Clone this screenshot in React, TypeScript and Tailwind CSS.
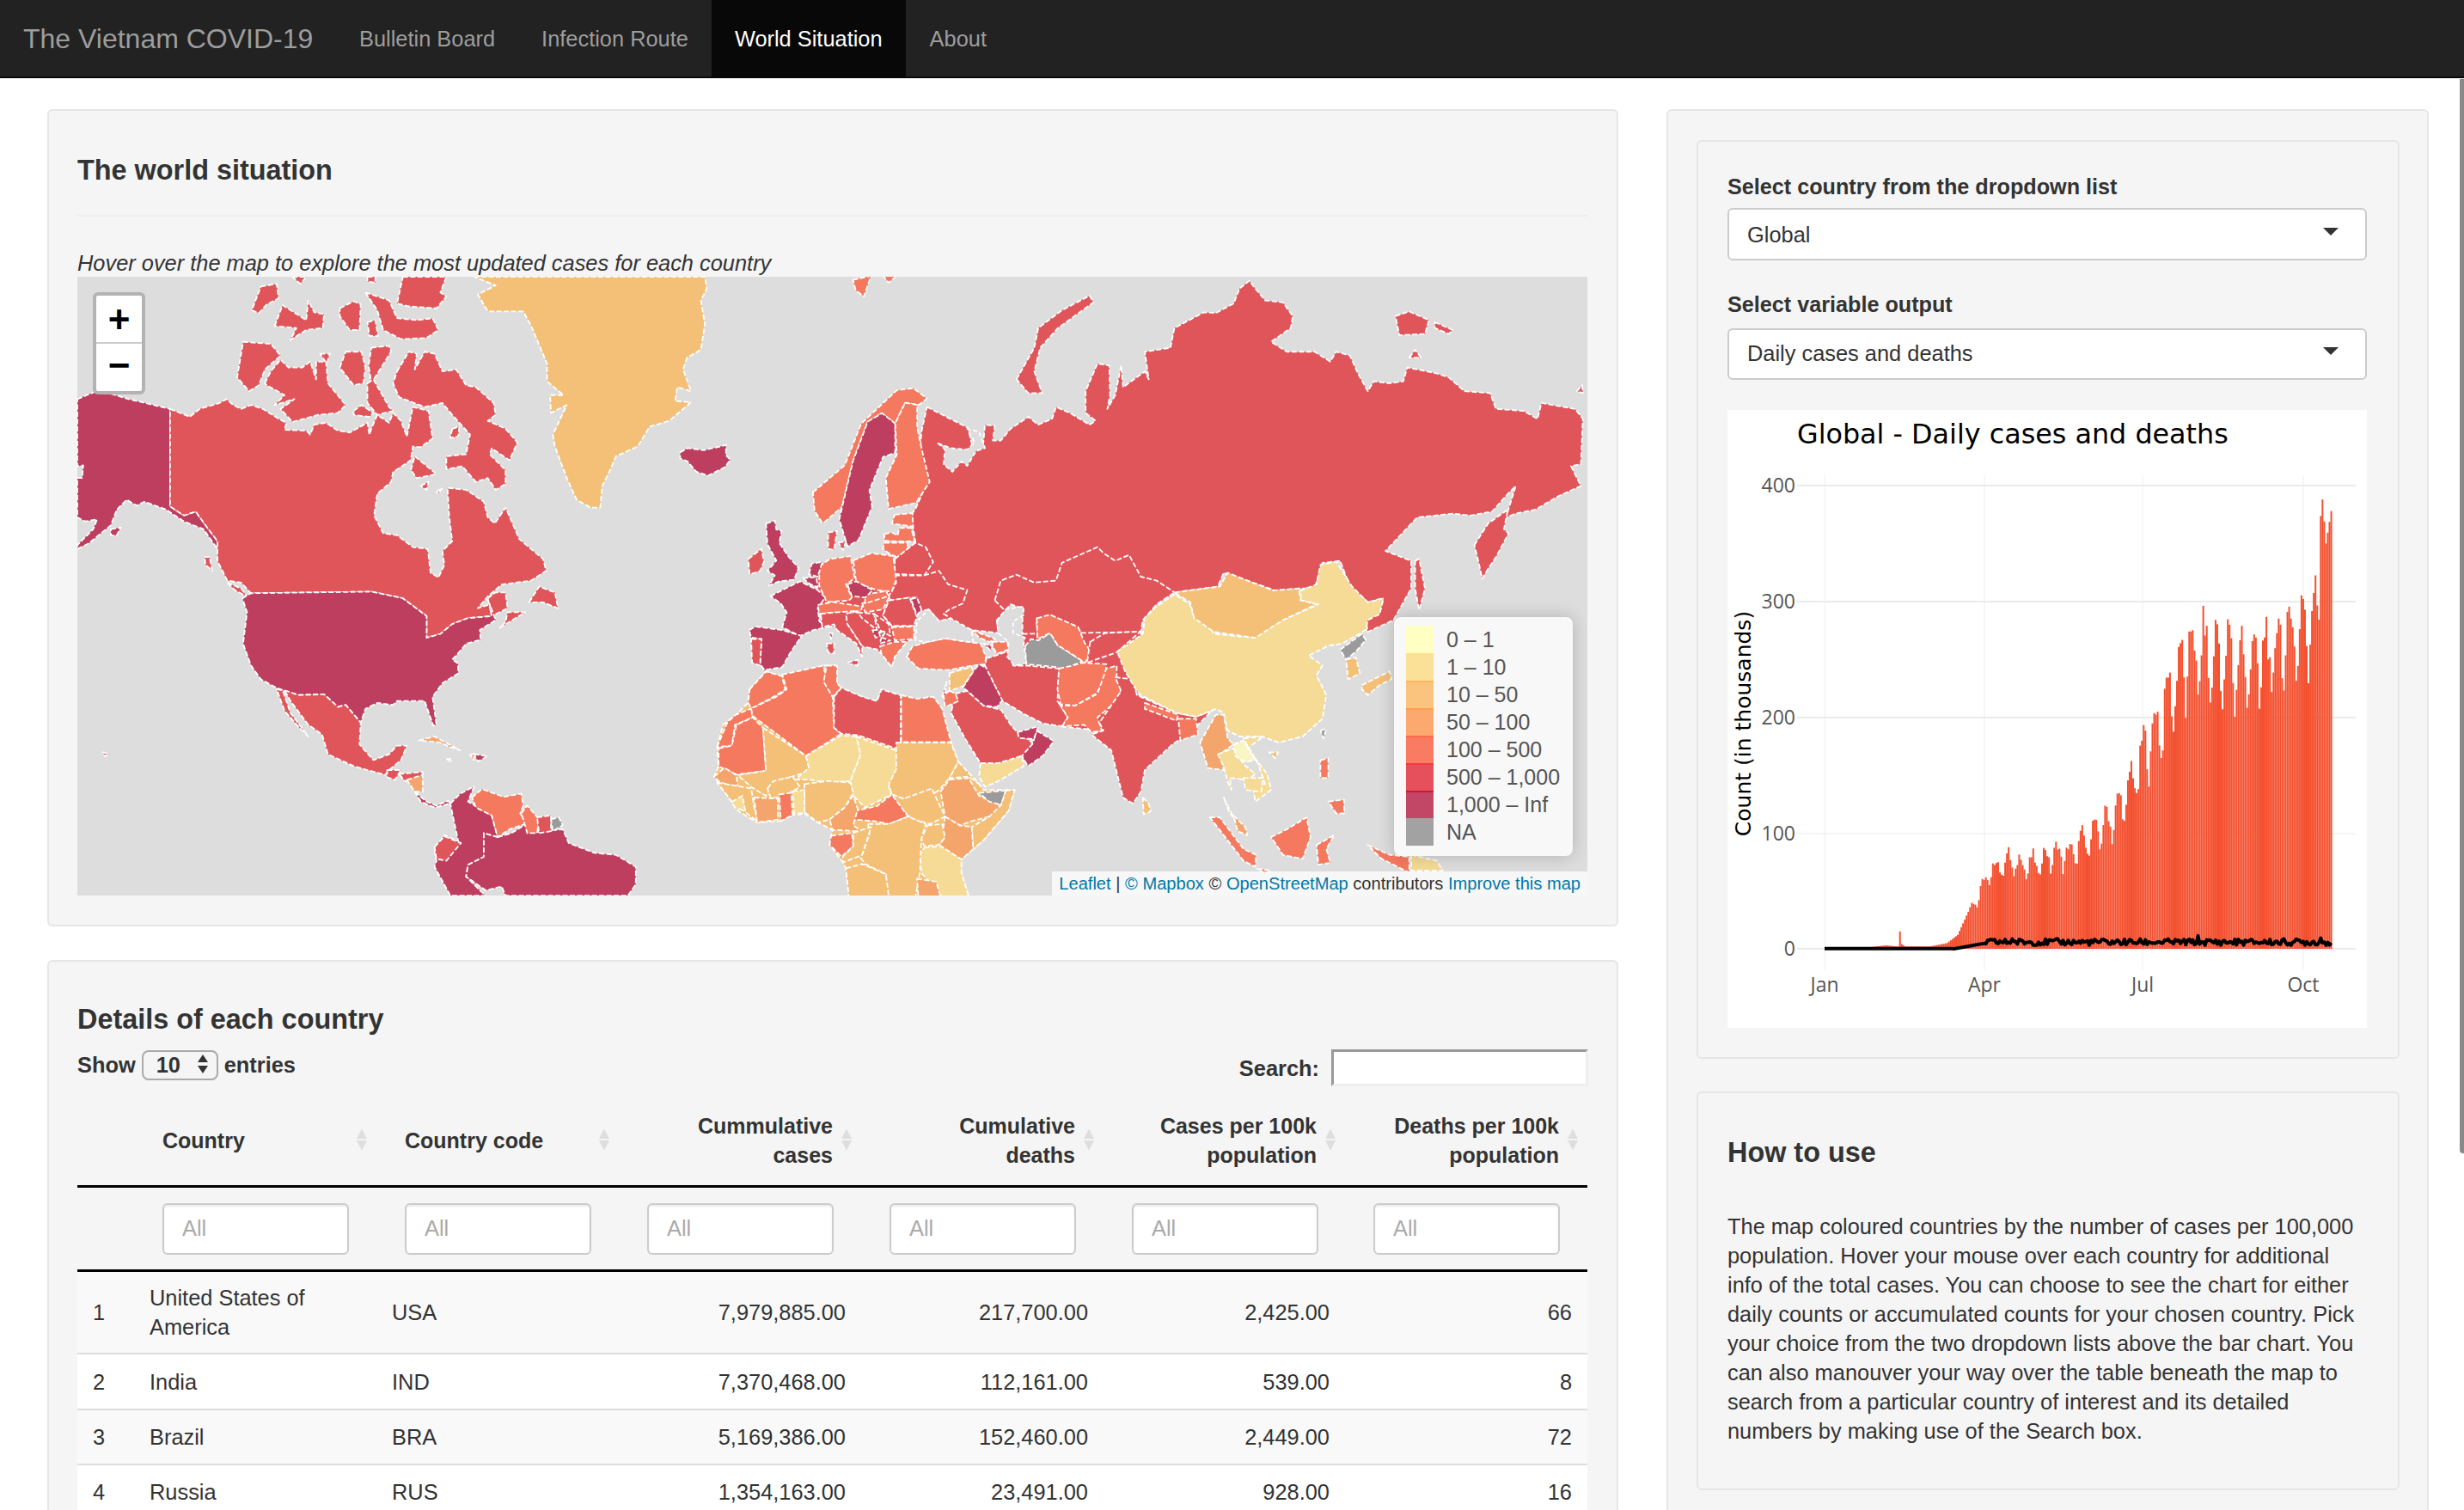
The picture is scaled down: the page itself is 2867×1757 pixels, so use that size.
import React from "react";

const C = {
  a: "#bd3e5e",
  r: "#e0555a",
  o: "#f5795e",
  l: "#f4a56c",
  m: "#f4c078",
  y: "#f5db96",
  p: "#f9f6c4",
  g: "#9b9b9b",
  s: "#dddddd",
};
type Shape = [keyof typeof C, string];

const Z8: Shape[] = [
  ["a", "0,310 60,285 80,295 130,310 235,335 235,582 270,605 300,595 325,630 355,670 355,690 320,640 270,620 225,590 170,570 150,580 125,565 100,590 85,630 60,650 30,675 0,690 0,680 40,640 50,615 20,620 0,610 0,510 12,510 15,478 0,480"],
  ["a", "85,640 110,635 100,655 85,655"],
  ["r", "235,335 285,355 310,335 360,320 378,310 395,325 415,335 440,325 470,335 510,360 530,370 525,388 580,390 590,400 600,375 630,370 660,390 690,395 735,370 740,400 745,385 760,350 790,370 800,345 820,365 835,405 850,330 890,340 900,410 870,432 850,430 845,465 800,495 795,520 760,550 752,605 775,650 810,655 850,685 888,690 895,750 915,762 930,730 925,695 950,670 942,605 938,535 985,540 1030,570 1040,610 1058,625 1085,585 1120,665 1180,715 1188,745 1150,770 1075,780 1040,810 1015,840 1045,830 1050,860 990,865 950,880 920,905 885,915 885,860 825,815 745,798 440,802 415,775 380,770 355,720 355,670 325,630 300,595 270,605 235,582"],
  ["r", "810,240 840,190 860,195 855,235 880,190 905,195 925,240 960,235 985,275 1010,280 1055,320 1060,350 1040,365 1085,385 1115,420 1095,465 1050,435 1045,450 1085,490 1085,525 1060,540 1040,510 1010,520 975,480 935,488 935,455 985,450 995,400 950,350 925,320 880,330 815,305 800,270"],
  ["r", "825,0 935,0 920,40 935,50 910,80 840,75 810,68"],
  ["r", "730,40 790,60 810,105 860,110 900,105 915,135 885,155 820,158 775,135 760,85"],
  ["r", "665,80 700,62 718,70 715,135 690,135 665,100"],
  ["r", "735,115 755,110 762,150 740,150"],
  ["r", "545,0 580,0 565,18"],
  ["r", "735,0 755,0 755,15 735,12"],
  ["r", "465,25 505,18 510,55 480,70 460,92 442,85"],
  ["r", "500,125 520,72 580,110 585,60 600,90 625,95 622,130 580,135 540,160 555,130"],
  ["r", "420,165 490,170 515,200 475,235 460,275 435,290 405,255"],
  ["r", "475,270 490,240 515,210 535,230 570,230 590,215 605,260 605,215 630,215 635,270 680,325 660,345 610,350 545,368 515,335 550,310 500,325 525,300 480,275"],
  ["r", "615,195 640,195 632,220"],
  ["r", "680,190 720,190 730,230 725,270 700,275 665,230"],
  ["r", "745,180 790,175 795,190 745,270 738,225"],
  ["r", "735,270 750,260 790,330 800,340 760,350 735,320"],
  ["r", "700,340 720,325 750,345 740,355 700,350"],
  ["r", "845,490 855,455 910,500 860,510"],
  ["r", "870,530 890,520 885,540"],
  ["r", "910,545 925,535 915,550"],
  ["r", "950,385 968,380 965,405 945,408"],
  ["r", "1145,825 1170,785 1210,800 1218,840 1180,825"],
  ["r", "1070,890 1135,850 1090,850 1085,875"],
  ["r", "1040,815 1060,800 1085,800 1090,840 1050,860"],
  ["r", "380,775 415,790 430,810 400,795"],
  ["r", "322,710 335,710 342,745 325,730"],
  ["a", "418,815 440,802 745,798 825,815 885,860 885,915 920,905 950,880 990,865 1050,860 1045,830 1060,870 1020,895 1022,920 985,930 960,960 950,970 965,980 965,1005 925,1030 900,1065 910,1135 902,1138 880,1075 810,1075 800,1085 760,1080 730,1095 718,1130 680,1085 660,1090 625,1058 560,1060 505,1042 465,1020 440,985 420,930 430,850"],
  ["r", "525,1048 560,1060 625,1058 660,1090 680,1085 718,1130 715,1185 750,1225 790,1210 810,1188 835,1188 820,1225 790,1250 780,1262 735,1250 700,1240 635,1210 620,1160 585,1135 540,1075"],
  ["r", "505,1045 520,1048 540,1105 585,1165 560,1140 525,1100"],
  ["r", "785,1250 820,1250 805,1275 785,1268"],
  ["r", "815,1260 875,1255 875,1270 830,1278"],
  ["l", "835,1275 875,1262 875,1305 855,1305"],
  ["a", "855,1305 885,1330 910,1340 940,1328 945,1335 905,1345 870,1330"],
  ["l", "865,1175 905,1165 970,1200 940,1190 920,1180"],
  ["a", "1005,1210 1040,1215 1015,1228"],
  ["l", "995,1212 1005,1208 1005,1225"],
  ["o", "935,1222 950,1222 945,1228"],
  ["a", "65,1205 80,1210 70,1215"],
  ["m", "1005,0 1590,0 1595,30 1580,60 1590,120 1580,185 1545,205 1535,235 1555,290 1520,280 1515,315 1555,318 1500,365 1450,380 1420,430 1365,455 1350,490 1330,530 1325,585 1300,585 1265,565 1240,510 1210,430 1205,400 1240,325 1200,345 1198,300 1232,300 1190,265 1190,220 1150,125 1130,88 1040,88 1015,45 1060,22"],
  ["a", "945,1335 970,1310 1005,1292 990,1330 1050,1365 1065,1420 1030,1410 1030,1470 990,1490 985,1520 1020,1555 1035,1568 945,1568 905,1495 910,1480 905,1455 930,1415 965,1430"],
  ["r", "905,1445 930,1418 972,1435 935,1480 910,1475"],
  ["a", "1065,1420 1100,1410 1140,1385 1145,1410 1230,1400 1245,1435 1310,1460 1365,1465 1415,1495 1415,1540 1395,1568 1085,1568 1075,1545 1035,1555 985,1520 990,1490 1030,1470 1030,1410"],
  ["o", "1000,1320 1025,1298 1080,1318 1125,1310 1130,1340 1122,1360 1140,1385 1095,1400 1065,1420 1050,1365 1010,1345"],
  ["o", "1125,1360 1140,1340 1170,1375 1165,1410 1140,1410 1130,1375"],
  ["r", "1165,1370 1200,1365 1200,1405 1170,1410"],
  ["g", "1200,1375 1220,1370 1230,1390 1205,1405"],
];

const Z10BASE: Shape[] = [
  ["r", "-112,330 -8,383 2,425 0,435 30,430 35,375 60,378 55,415 75,415 100,385 145,355 170,375 205,360 215,330 250,345 300,375 315,365 290,345 290,290 320,220 350,225 352,300 345,335 365,300 380,225 385,280 440,240 450,260 440,190 505,180 515,130 590,90 620,92 665,68 680,30 705,10 720,30 745,60 790,65 815,100 810,130 760,165 800,190 870,190 910,215 925,190 960,200 980,245 1005,290 1020,265 1060,270 1095,265 1105,230 1180,245 1210,255 1250,290 1315,295 1330,335 1400,340 1435,360 1445,320 1530,335 1550,360 1545,475 1520,480 1545,530 1490,555 1430,590 1380,600 1355,610 1380,530 1360,550 1320,595 1265,605 1220,600 1130,610 1050,695 1115,720 1115,790 1070,870 1005,900 1000,870 1040,815 1005,825 960,785 935,720 890,725 870,790 830,790 770,795 700,770 640,750 625,785 515,800 470,830 435,870 430,900 330,905 305,930 265,885 200,858 165,870 170,915 130,905 130,840 100,830 65,870 69,903 1,895 -66,873 -107,843 -137,813 -190,768 -194,715 -141,674 -152,603 -141,588 -111,520 -130,453 -126,393"],
  ["r", "130,905 430,900 440,1060 380,1050 330,1150 230,1140 130,1000"],
];

const Z2: Shape[] = [
  ["o", "72,565 130,500 160,400 225,320 255,315 280,340 265,355 240,350 222,400 198,375 172,395 145,490 125,600 90,640 75,610"],
  ["a", "172,395 198,375 222,400 222,470 200,480 175,560 180,600 155,680 135,695 120,630 145,490"],
  ["o", "240,350 262,355 262,410 272,470 285,540 260,590 210,605 205,530 225,475 222,400"],
  ["o", "145,55 178,45 165,95 150,80"],
  ["o", "200,45 225,45 210,62"],
];

const Z9: Shape[] = [
  ["m", "100,1075 120,1000 165,965 205,925 210,880 265,820 318,835 460,800 505,800 505,860 520,875 590,905 640,920 655,880 720,900 775,912 830,905 860,945 890,1058 915,1125 985,1200 1000,1220 1105,1220 1085,1290 1000,1390 965,1420 925,1455 925,1500 950,1580 545,1580 535,1485 525,1465 480,1405 490,1355 440,1330 395,1300 355,1305 315,1325 235,1330 170,1290 90,1175 105,1140"],
  ["r", "410,490 560,445 700,440 705,520 680,580 660,630 690,670 765,668 765,710 740,720 700,770 690,805 655,760 640,745 590,735 540,660 470,670 440,605 440,545"],
  ["a", "-25,80 0,65 55,72 130,55 130,90 145,105 125,130 70,158 30,145 0,110 -25,100"],
  ["s", "845,48 870,70 865,120 895,145 925,110 945,125 975,75 1005,65 985,10 945,0 970,45 945,70 890,65"],
  ["o", "700,290 760,285 762,330 690,320"],
  ["o", "665,355 690,350 710,360 715,335 755,335 768,380 710,380 665,378"],
  ["o", "665,385 745,385 740,410 710,435 680,420 660,405"],
  ["r", "700,440 770,385 805,400 830,450 800,495 700,490"],
  ["r", "700,495 800,495 850,480 880,525 945,545 930,590 885,610 865,625 890,640 850,650 815,610 790,615 775,570 750,570 690,580 680,565 705,520"],
  ["o", "560,445 620,420 695,430 705,510 690,550 640,545 570,520"],
  ["r", "680,580 750,570 775,635 765,665 690,665 660,630"],
  ["a", "755,575 775,570 790,610 775,630"],
  ["o", "690,670 765,668 765,710 700,715"],
  ["o", "590,590 660,560 680,570 660,610 600,620"],
  ["o", "600,560 670,548 680,565 600,590"],
  ["o", "445,465 480,440 550,430 565,505 535,525 555,570 545,580 470,585 445,530"],
  ["a", "540,525 570,515 625,545 600,570 555,565"],
  ["r", "475,350 505,345 495,410 475,405"],
  ["r", "510,385 535,380 525,410"],
  ["a", "410,490 420,455 455,450 440,500"],
  ["a", "390,505 435,500 440,535 415,525"],
  ["a", "280,565 380,515 440,545 465,570 440,605 445,650 470,670 425,680 380,700 320,670 335,620 315,590"],
  ["o", "440,595 490,585 590,600 585,620 490,620 445,625"],
  ["r", "450,625 500,620 575,615 535,625 540,660 590,735 590,770 570,725 505,680 495,660 455,670"],
  ["r", "540,790 575,780 575,800"],
  ["r", "470,725 495,725 495,760 475,755"],
  ["a", "480,690 490,690 485,710"],
  ["r", "575,620 630,625 640,680 590,640"],
  ["r", "630,625 680,660 685,700 650,680"],
  ["a", "625,680 645,680 650,700 635,705"],
  ["g", "650,685 670,685 660,700"],
  ["a", "655,705 685,715 650,725"],
  ["o", "650,735 700,720 740,720 700,770 690,805 655,760"],
  ["o", "740,770 760,735 810,720 870,708 960,722 990,725 1008,770 1005,795 960,800 880,815 780,810"],
  ["o", "960,680 1040,710 1020,720 985,705"],
  ["o", "1030,720 1080,720 1085,745 1045,760 1030,735"],
  ["a", "1000,725 1030,735 1025,750"],
  ["a", "265,320 295,310 300,340 318,345 310,385 340,430 375,470 360,510 310,515 275,530 295,495 270,480 300,445 270,390"],
  ["r", "205,440 250,405 258,450 245,480 210,492"],
  ["a", "208,680 230,668 320,680 385,700 345,760 320,805 260,815 245,795 250,710 215,705"],
  ["r", "215,710 250,710 245,800 218,790"],
  ["o", "210,880 265,820 318,835 330,880 300,900 215,945 205,925"],
  ["o", "100,1075 135,990 165,965 215,945 220,975 160,1000 150,1070"],
  ["o", "320,830 460,800 470,870 490,905 495,1010 520,1030 400,1105 220,970 215,945 300,905 335,880"],
  ["o", "470,800 505,800 505,860 520,875 490,905 460,855"],
  ["r", "495,905 520,875 590,905 640,920 655,880 720,900 720,1085 575,1035 520,1030 495,1010"],
  ["o", "722,900 775,912 830,905 860,945 890,1058 722,1058"],
  ["o", "105,1080 150,1070 165,1000 220,975 255,1010 265,1155 165,1168 105,1140"],
  ["m", "255,1010 400,1105 410,1145 400,1160 290,1195 265,1240 215,1210 170,1170 265,1155"],
  ["y", "400,1105 520,1035 570,1040 585,1100 550,1190 470,1195 410,1185 365,1185 410,1145"],
  ["y", "570,1040 715,1090 705,1150 680,1210 690,1235 600,1280 560,1240 550,1190 585,1100"],
  ["m", "705,1060 890,1060 915,1125 885,1180 850,1220 820,1240 730,1250 690,1235 680,1200 705,1150"],
  ["m", "690,1235 730,1250 825,1215 870,1310 820,1335 760,1320 720,1280"],
  ["o", "560,1320 570,1290 640,1275 690,1235 745,1310 680,1335 630,1325"],
  ["m", "395,1200 470,1190 550,1195 560,1230 530,1280 480,1320 440,1330 395,1295"],
  ["l", "480,1320 530,1280 560,1240 575,1285 560,1340 590,1360 490,1355"],
  ["l", "90,1175 125,1145 165,1170 170,1210 110,1195"],
  ["m", "100,1195 215,1215 225,1280 240,1330 150,1260"],
  ["y", "150,1260 185,1240 195,1290 160,1280"],
  ["l", "225,1245 305,1250 305,1320 235,1330"],
  ["m", "270,1215 290,1190 355,1175 380,1210 320,1245 280,1245"],
  ["o", "310,1235 350,1230 355,1305 315,1325"],
  ["y", "355,1225 395,1220 395,1298 360,1300"],
  ["l", "885,1185 950,1180 985,1240 1075,1280 1020,1310 960,1325 920,1340 870,1310 855,1225"],
  ["m", "915,1125 985,1200 950,1175 885,1180"],
  ["g", "985,1230 1075,1222 1060,1270 1020,1260"],
  ["m", "1075,1222 1105,1220 1085,1290 1000,1390 965,1420 960,1345 1020,1310 1060,1270"],
  ["l", "870,1310 920,1340 960,1345 965,1420 925,1455 855,1410"],
  ["m", "810,1340 860,1335 870,1380 850,1405 800,1410 790,1385"],
  ["y", "800,1415 855,1410 925,1455 925,1500 950,1580 860,1580 790,1500 785,1440"],
  ["m", "610,1335 680,1335 745,1310 805,1335 790,1385 785,1500 770,1580 670,1580 670,1505 600,1470 585,1450 615,1370"],
  ["o", "485,1375 555,1365 560,1410 520,1445 480,1405"],
  ["m", "560,1365 620,1345 590,1440 525,1465 525,1445 560,1410"],
  ["m", "535,1485 590,1470 670,1505 680,1580 545,1580"],
  ["l", "775,1520 840,1530 855,1580 780,1580"],
  ["r", "905,895 945,885 1000,935 1060,950 1095,1005 1120,1030 1150,1050 1165,1060 1145,1100 1050,1130 990,1130 940,1050 890,960"],
  ["a", "930,875 965,820 985,795 1020,815 1030,850 1065,915 1045,940 1000,935 945,885"],
  ["m", "885,825 960,805 965,820 930,870 885,885"],
  ["o", "885,885 905,895 915,920 870,940 865,900"],
  ["a", "860,905 875,855 870,895"],
  ["r", "1010,775 1030,770 1085,750 1100,800 1150,800 1255,810 1250,920 1285,975 1265,1005 1200,995 1140,965 1065,920 1030,850 1005,800"],
  ["y", "990,1130 1050,1130 1130,1105 1135,1140 1050,1190 1005,1210 985,1175"],
  ["a", "1180,1020 1238,1055 1200,1105 1150,1140 1130,1105 1165,1065"],
  ["a", "1115,1025 1185,1005 1170,1048 1120,1045"],
  ["g", "1140,735 1160,710 1185,715 1225,690 1250,730 1335,785 1300,800 1275,830 1250,805 1145,795"],
  ["o", "1180,640 1225,628 1320,670 1340,720 1360,750 1345,790 1335,785 1250,730 1225,690 1182,710"],
  ["r", "1360,720 1410,690 1530,685 1450,755 1350,790"],
  ["o", "1255,810 1300,800 1335,790 1415,795 1410,850 1380,895 1310,935 1260,930 1250,880"],
  ["o", "1265,1005 1285,975 1260,935 1310,935 1385,895 1415,810 1450,800 1450,845 1465,880 1450,920 1385,975 1400,1020 1365,1025 1340,1000"],
  ["s", "1045,650 1075,610 1135,600 1135,630 1100,650 1100,690 1140,705 1135,730 1145,790 1105,800 1080,770 1085,720 1050,690"],
  ["s", "770,715 775,650 815,610 850,650 890,640 960,680 965,722 870,708 810,720"],
];

const Z10: Shape[] = [
  ["r", "365,1015 410,1020 420,1060 520,1105 570,1115 610,1100 575,1135 560,1160 525,1175 510,1185 440,1250 430,1305 410,1335 385,1320 355,1200 305,1160 335,1150 325,1130 380,1050"],
  ["o", "525,1120 570,1120 575,1160 530,1175"],
  ["o", "440,1080 525,1110 520,1125 440,1095"],
  ["y", "370,950 435,905 440,865 470,835 515,805 555,830 565,865 600,880 615,905 715,915 780,875 790,870 880,830 835,820 835,795 875,780 885,730 925,722 965,785 1005,825 1045,815 1035,855 1005,870 1000,895 940,930 905,935 855,960 890,985 875,1010 900,1060 890,1120 840,1165 780,1180 735,1165 680,1165 650,1150 640,1105 620,1095 570,1115 520,1105 430,1060 420,1050 390,1000"],
  ["m", "515,800 630,785 650,750 700,770 765,795 830,790 835,820 875,830 790,870 720,915 615,900 565,865 555,825"],
  ["g", "935,945 990,905 1000,920 975,950 950,970"],
  ["m", "950,970 975,965 985,1005 955,1020"],
  ["m", "990,1035 1060,1000 1065,1020 1035,1035 1005,1060 990,1045"],
  ["g", "885,1150 900,1145 893,1170"],
  ["r", "1125,720 1135,715 1150,790 1135,845 1125,790"],
  ["r", "1275,680 1310,625 1360,590 1350,640 1362,650 1330,710 1310,740 1295,765 1285,720"],
  ["r", "115,260 160,180 170,130 230,85 300,48 310,65 220,130 175,180 160,240 180,295 145,295"],
  ["r", "1075,100 1110,88 1160,110 1150,145 1085,148"],
  ["r", "1175,115 1220,135 1210,145 1175,130"],
  ["r", "1110,205 1125,185 1140,205"],
  ["r", "1535,290 1548,275 1550,295"],
  ["l", "580,1180 620,1110 640,1110 650,1170 665,1185 630,1210 640,1250 600,1245"],
  ["y", "625,1210 665,1195 690,1235 720,1260 700,1275 655,1270 660,1300 650,1280 640,1240"],
  ["p", "665,1185 690,1175 720,1225 695,1230 670,1215"],
  ["y", "690,1170 740,1165 700,1195 750,1260 760,1300 720,1330 715,1300 745,1285 725,1230"],
  ["y", "690,1270 740,1270 735,1305 695,1300"],
  ["y", "640,1320 665,1370 655,1360"],
  ["o", "605,1370 630,1370 690,1450 722,1465 720,1495 690,1480"],
  ["l", "665,1365 695,1395 700,1415 675,1405"],
  ["o", "760,1420 800,1400 850,1370 860,1420 840,1475 790,1465"],
  ["o", "885,1225 905,1220 905,1270 885,1270"],
  ["o", "905,1330 945,1325 945,1360 925,1360"],
  ["o", "875,1440 920,1415 900,1450 910,1485 880,1490"],
  ["o", "1005,1440 1060,1465 1110,1470 1110,1510 1040,1475"],
  ["y", "1115,1465 1180,1480 1195,1505 1115,1505"],
  ["m", "435,1320 450,1335 455,1355 437,1362"],
  ["m", "755,1205 778,1205 770,1220"],
  ["o", "725,1500 760,1505 745,1512"],
];

const LINES10 = [
  "60,820 75,770 115,755 160,775 215,770 230,725 320,685 335,700 365,720 400,705 430,760 470,770 515,800",
  "60,820 85,845",
];

function Shapes({ list, transform }: { list: Shape[]; transform: string }) {
  return (
    <g transform={transform}>
      {list.map(([c, p], i) => (
        <polygon
          key={i}
          points={p}
          fill={C[c]}
          stroke="#fff"
          strokeWidth={1.8}
          strokeDasharray={c === "s" ? "5 3" : "6 2.5"}
          strokeLinejoin="round"
          vectorEffect="non-scaling-stroke"
        />
      ))}
    </g>
  );
}

function WorldMap() {
  const t8 = "translate(0,0) scale(0.4592)";
  const t9 = "translate(710,177) scale(0.3444)";
  const t10 = "translate(1040,0) scale(0.4592)";
  const t2 = "translate(810,-23) scale(0.6378,0.4847)";
  return (
    <svg viewBox="0 0 1757 720" className="block w-full h-full" preserveAspectRatio="none">
      <rect width="1757" height="720" fill="#dddddd" />
      <Shapes list={Z10BASE} transform={t10} />
      <Shapes list={Z2} transform={t2} />
      <Shapes list={Z9} transform={t9} />
      <Shapes list={Z10} transform={t10} />
      <g transform={t10}>
        {LINES10.map((p, i) => (
          <polyline key={i} points={p} fill="none" stroke="#fff" strokeWidth={1.8} strokeDasharray="6 2.5" vectorEffect="non-scaling-stroke" />
        ))}
      </g>
      <Shapes list={Z8} transform={t8} />
    </svg>
  );
}

const LEGEND: [string, string, string][] = [
  ["#ffffc4", "#fffdc0", "0 – 1"],
  ["#fbe098", "#fee08e", "1 – 10"],
  ["#fbc47e", "#fdb85f", "10 – 50"],
  ["#fca970", "#fd9d50", "50 – 100"],
  ["#f97c62", "#fb6a4a", "100 – 500"],
  ["#e5505a", "#ef3b3f", "500 – 1,000"],
  ["#c24766", "#c5183b", "1,000 – Inf"],
  ["#a2a2a2", "#a2a2a2", "NA"],
];

function Legend() {
  return (
    <div className="absolute left-[1532px] top-[396px] w-[208px] h-[278px] rounded-lg bg-[#f8f8f8] shadow-[0_0_20px_rgba(0,0,0,0.2)] pl-[14px] pt-[10px]">
      {LEGEND.map(([c, t, l], i) => (
        <div key={l} className="flex h-[32px] items-center">
          <div
            className={"w-[32px] h-[32px]" + (i === 0 ? "" : " border-t-2")}
            style={{ background: c, borderTopColor: t }}
          />
          <div className="ml-[15px] text-[25px] leading-[32px] text-[#555]">{l}</div>
        </div>
      ))}
    </div>
  );
}

function ZoomControl() {
  return (
    <div className="absolute left-[18px] top-[18px] w-[61px] border-[4px] border-[#b3b3b3] rounded-md bg-white text-black font-bold text-center text-[44px] leading-[56px]">
      <div className="h-[56px] border-b-2 border-[#ccc]">+</div>
      <div className="h-[55px] leading-[50px]">−</div>
    </div>
  );
}

function Attribution() {
  return (
    <div className="absolute right-0 bottom-0 h-[28px] px-[8px] bg-white/75 text-[20.1px] leading-[28px] text-[#333] whitespace-nowrap">
      <span className="text-[#0078a8]">Leaflet</span> | <span className="text-[#0078a8]">© Mapbox</span> © <span className="text-[#0078a8]">OpenStreetMap</span> contributors <span className="text-[#0078a8]">Improve this map</span>
    </div>
  );
}

const KEYS: [number, number][] = [
  [21, 0.5], [35, 3], [42, 2], [43, 15], [44, 4], [46, 2], [60, 2], [70, 5], [76, 12], [82, 32], [88, 55], [95, 78], [103, 88], [110, 85], [120, 85], [130, 95], [140, 95], [150, 110], [160, 125], [168, 140], [176, 170], [184, 205], [192, 230], [200, 270], [207, 292], [213, 298], [240, 285], [255, 295], [262, 310], [270, 322], [276, 325], [281, 345], [284, 388], [286, 350], [289, 378],
];
const WEEK = [1, 0.94, 0.84, 0.74, 0.8, 0.92, 0.98];

function rnd(d: number) {
  const x = Math.sin(d * 12.9898) * 43758.5453;
  return x - Math.floor(x);
}

function cases(d: number) {
  for (let i = 0; i < KEYS.length - 1; i++) {
    const [a, va] = KEYS[i];
    const [b, vb] = KEYS[i + 1];
    if (d >= a && d <= b) {
      const v = va + ((vb - va) * (d - a)) / (b - a);
      if (d < 85 || d >= 283) return v;
      return v * WEEK[d % 7] * (0.9 + 0.12 * rnd(d));
    }
  }
  return 0;
}
function deaths(d: number) {
  if (d < 74) return 0.1;
  if (d < 92) return ((d - 74) / 18) * 5;
  const spike = d === 107 ? 4 : d === 213 ? 3 : d === 283 ? 3 : 0;
  return 3 + 5.5 * rnd(d + 500) + spike;
}

const X0 = 2123;
const DX = 2.04;
const Y0 = 1104;
const YS = 1.3475;

function Chart() {
  const days = Array.from({ length: 290 }, (_, i) => i);
  const line = days.map((d) => `${X0 + d * DX},${Y0 - deaths(d) * YS}`).join(" ");
  return (
    <svg viewBox="2010 477 744 719" className="block w-full h-full bg-white">
      {[2123, 2309, 2493, 2680].map((x) => (
        <line key={x} x1={x} x2={x} y1={553} y2={1129} stroke="#eeeeee" strokeWidth={1} />
      ))}
      {[565, 700, 835, 970, 1104].map((y, i) => (
        <line key={y} x1={2091} x2={2741} y1={y} y2={y} stroke="#ebebeb" strokeWidth={i === 3 ? 1 : 2} />
      ))}
      {days.map((d) => {
        const v = cases(d);
        if (v <= 0) return null;
        return <rect key={d} x={X0 + d * DX - 1} y={Y0 - v * YS} width={2} height={v * YS} fill="#f4502f" />;
      })}
      <polyline points={line} fill="none" stroke="#000" strokeWidth={4} strokeLinejoin="round" />
      <g fontFamily="'Open Sans',sans-serif" fontSize={23} fill="#555">
        {[["400", 565], ["300", 700], ["200", 835], ["100", 970], ["0", 1104]].map(([t, y]) => (
          <text key={t} x={2089} y={Number(y) + 8} textAnchor="end">{t}</text>
        ))}
        {[["Jan", 2123], ["Apr", 2309], ["Jul", 2493], ["Oct", 2680]].map(([t, x]) => (
          <text key={t} x={x} y={1154} textAnchor="middle">{t}</text>
        ))}
      </g>
      <text x={2091} y={516} fontFamily="'DejaVu Sans',sans-serif" fontSize={31.8} fill="#000">Global - Daily cases and deaths</text>
      <text transform="translate(2037,842) rotate(-90)" textAnchor="middle" fontFamily="'DejaVu Sans',sans-serif" fontSize={25} fill="#000">Count (in thousands)</text>
    </svg>
  );
}

function SortArrows() {
  return (
    <svg className="absolute right-[10px] top-1/2 -translate-y-1/2" width="14" height="27" viewBox="0 0 14 27" fill="#dedede">
      <path d="M7 1 L13 12.5 H1 Z" />
      <path d="M7 26 L13 14.5 H1 Z" />
    </svg>
  );
}

const ROWS: [string, string, string, string, string, string, string, string][] = [
  ["1", "United States of America", "USA", "7,979,885.00", "217,700.00", "2,425.00", "66", "h-[96px] bg-[#f9f9f9]"],
  ["2", "India", "IND", "7,370,468.00", "112,161.00", "539.00", "8", "h-[65px] bg-white"],
  ["3", "Brazil", "BRA", "5,169,386.00", "152,460.00", "2,449.00", "72", "h-[64px] bg-[#f9f9f9]"],
  ["4", "Russia", "RUS", "1,354,163.00", "23,491.00", "928.00", "16", "h-[64px] bg-white"],
];

const HEADS: [string, boolean][] = [
  ["Country", false],
  ["Country code", false],
  ["Cummulative cases", true],
  ["Cumulative deaths", true],
  ["Cases per 100k population", true],
  ["Deaths per 100k population", true],
];

function DataTable() {
  return (
    <table className="mt-[8px] w-[1757px] table-fixed border-separate border-spacing-0 text-[25.4px] leading-[34px] text-[#333]">
      <colgroup>
        <col className="w-[66px]" />
        <col className="w-[282px]" />
        <col className="w-[282px]" />
        <col className="w-[282px]" />
        <col className="w-[282px]" />
        <col className="w-[281px]" />
        <col className="w-[282px]" />
      </colgroup>
      <thead>
        <tr className="h-[110px]">
          <th className="border-b-[3px] border-black" />
          {HEADS.map(([h, right]) => (
            <th key={h} className={"relative border-b-[3px] border-black pl-[33px] pr-[33px] pt-[2px] font-bold text-[25px] " + (right ? "text-right" : "text-left")}>
              {h}
              <SortArrows />
            </th>
          ))}
        </tr>
        <tr className="h-[98px]">
          <th className="border-b-[3px] border-black" />
          {HEADS.map(([h]) => (
            <th key={h} className="border-b-[3px] border-black pl-[33px] pr-0 font-normal text-left">
              <input
                readOnly
                placeholder="All"
                className="w-[217px] h-[60px] rounded-md border-2 border-[#ccc] bg-white pl-[21px] text-[25.4px] shadow-[inset_0_2px_2px_rgba(0,0,0,0.08)] placeholder:text-[#aaa]"
              />
            </th>
          ))}
        </tr>
      </thead>
      <tbody>
        {ROWS.map((r) => (
          <tr key={r[0]} className={r[7]}>
            <td className="border-b-2 border-[#ddd] px-[18px]">{r[0]}</td>
            <td className="border-b-2 border-[#ddd] px-[18px]">{r[1]}</td>
            <td className="border-b-2 border-[#ddd] px-[18px]">{r[2]}</td>
            <td className="border-b-2 border-[#ddd] px-[18px] text-right">{r[3]}</td>
            <td className="border-b-2 border-[#ddd] px-[18px] text-right">{r[4]}</td>
            <td className="border-b-2 border-[#ddd] px-[18px] text-right">{r[5]}</td>
            <td className="border-b-2 border-[#ddd] px-[18px] text-right">{r[6]}</td>
          </tr>
        ))}
      </tbody>
    </table>
  );
}

function Caret() {
  return <div className="w-0 h-0 mb-[6px] border-x-[9px] border-x-transparent border-t-[9px] border-t-[#333]" />;
}

function SelectBox({ value, h, extra }: { value: string; h: string; extra?: string }) {
  return (
    <div className={"flex w-[744px] items-center justify-between bg-white border-2 border-[#ccc] rounded-md pl-[21px] pr-[31px] text-[25.4px] text-[#333] " + h + (extra ? " " + extra : "")}>
      <span>{value}</span>
      <Caret />
    </div>
  );
}

export default function App() {
  return (
    <div className="relative h-[1757px] overflow-hidden bg-white font-['Liberation_Sans',Arial,sans-serif] text-[25.4px] leading-[34px] text-[#333]">
      <nav className="flex h-[91px] items-center border-b-2 border-[#080808] bg-[#222] text-[#9d9d9d]">
        <div className="w-[391px] pl-[27px] text-[32px] leading-[40px]">The Vietnam COVID-19</div>
        <div className="h-full flex items-center px-[27px]">Bulletin Board</div>
        <div className="h-full flex items-center px-[27px]">Infection Route</div>
        <div className="h-full flex items-center px-[27px] bg-[#080808] text-white">World Situation</div>
        <div className="h-full flex items-center pl-[28px] pr-[27px]">About</div>
      </nav>

      <div className="flex pt-[36px] pl-[55px]">
        <div className="w-[1828px] shrink-0">
          <section className="h-[951px] rounded-md border-2 border-[#e6e6e6] bg-[#f5f5f5] px-[33px] pt-[49px]">
            <h3 className="text-[32.4px] leading-[40px] font-bold">The world situation</h3>
            <hr className="mt-[32px] border-t-2 border-[#eeeeee]" />
            <p className="mt-[36px] h-[34px] pt-[1px] italic">Hover over the map to explore the most updated cases for each country</p>
            <div className="relative w-[1757px] h-[720px] overflow-hidden">
              <WorldMap />
              <ZoomControl />
              <Legend />
              <Attribution />
            </div>
          </section>

          <section className="mt-[39px] h-[700px] rounded-md border-2 border-[#e6e6e6] bg-[#f5f5f5] px-[33px] pt-[47px]">
            <h3 className="text-[32.4px] leading-[40px] font-bold">Details of each country</h3>
            <div className="mt-[15px] flex h-[43px] justify-between font-bold">
              <div className="flex items-center h-[36px] gap-[7px]">
                <span>Show</span>
                <span className="relative w-[89px] h-[35px] rounded-lg border-2 border-[#aaa] font-bold pl-[15px] leading-[31px]">
                  10
                  <svg className="absolute right-[10px] top-[3px]" width="12" height="22" viewBox="0 0 12 22" fill="#333">
                    <path d="M6 0 L12 9 H0 Z" />
                    <path d="M6 22 L12 13 H0 Z" />
                  </svg>
                </span>
                <span>entries</span>
              </div>
              <div className="flex items-center gap-[14px]">
                <span>Search:</span>
                <input readOnly className="w-[299px] h-[43px] bg-white border-[3px] border-t-[#999] border-l-[#999] border-r-[#eee] border-b-[#eee]" />
              </div>
            </div>
            <DataTable />
          </section>
        </div>

        <aside className="ml-[56px] w-[887px] h-[1700px] shrink-0 rounded-md border-2 border-[#e6e6e6] bg-[#f5f5f5] pl-[33px] pr-[32px] pt-[34px]">
          <div className="h-[1069px] rounded-md border-2 border-[#e6e6e6] px-[34px] pt-[35px]">
            <label className="block font-bold text-[25.2px] mb-[8px]">Select country from the dropdown list</label>
            <SelectBox value="Global" h="h-[61px]" />
            <label className="block font-bold text-[25.2px] mt-[34px] mb-[11px]">Select variable output</label>
            <SelectBox value="Daily cases and deaths" h="h-[60px]" extra="pb-[2px]" />
            <div className="mt-[35px] w-[744px] h-[719px]">
              <Chart />
            </div>
          </div>
          <div className="mt-[38px] h-[464px] rounded-md border-2 border-[#e6e6e6] px-[34px] pt-[49px]">
            <h3 className="text-[32.4px] leading-[40px] font-bold">How to use</h3>
            <p className="mt-[49px]">
              The map coloured countries by the number of cases per 100,000 population. Hover your mouse over each country for additional info of the total cases. You can choose to see the chart for either daily counts or accumulated counts for your chosen country. Pick your choice from the two dropdown lists above the bar chart. You can also manouver your way over the table beneath the map to search from a particular country of interest and its detailed numbers by making use of the Search box.
            </p>
          </div>
        </aside>
      </div>

      <div className="absolute right-0 top-[92px] w-[5px] h-[1250px] rounded-bl-sm bg-[#888]" />
    </div>
  );
}
